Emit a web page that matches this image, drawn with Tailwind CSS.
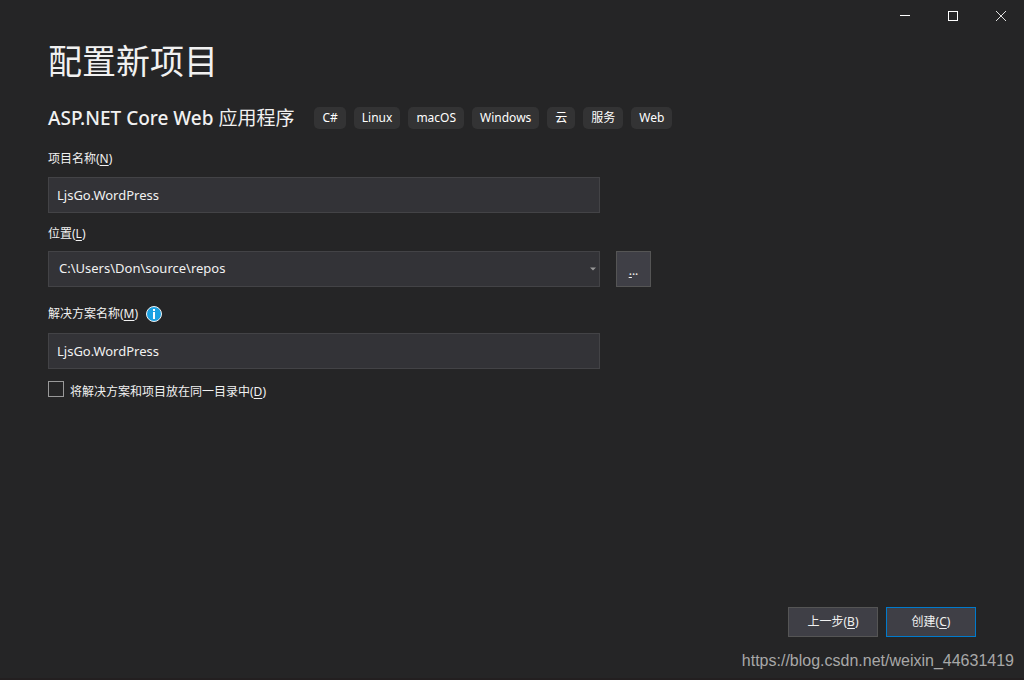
<!DOCTYPE html>
<html lang="zh-CN">
<head>
<meta charset="utf-8">
<meta name="viewport" content="width=device-width, initial-scale=1">
<title>配置新项目</title>
<script src="https://cdn.jsdelivr.net/npm/@tailwindcss/browser@4"></script>
</head>
<body class="flex min-h-screen flex-col border-b-2 border-[#231f20] bg-[#252526] font-['Noto_Sans','Noto_Sans_CJK_SC',sans-serif] text-xs text-[#f1f1f1]">
  <header class="flex h-8 justify-end">
    <button type="button" aria-label="最小化" class="flex h-8 w-12 items-center justify-center">
      <svg class="size-4" viewBox="0 0 16 16" fill="none" stroke="#fff" shape-rendering="crispEdges"><path d="M4 7.5h10"/></svg>
    </button>
    <button type="button" aria-label="最大化" class="flex h-8 w-12 items-center justify-center">
      <svg class="size-4" viewBox="0 0 16 16" fill="none" stroke="#fff" shape-rendering="crispEdges"><path d="M4.5 3.5h9v9h-9z"/></svg>
    </button>
    <button type="button" aria-label="关闭" class="flex h-8 w-12 items-center justify-center">
      <svg class="size-4" viewBox="0 0 16 16" fill="none" stroke="#e0e0e0"><path d="M4 3l10 10M14 3L4 13"/></svg>
    </button>
  </header>

  <main class="flex flex-1 flex-col px-12 pt-[7px]">
    <h1 class="text-[34px] leading-[44px]">配置新项目</h1>

    <div class="mt-[21px] flex items-center gap-5">
      <h2 class="text-[19px] leading-7"><span class="font-medium">ASP.NET Core Web</span> 应用程序</h2>
      <ul class="flex gap-2 leading-[22px] text-white">
        <li class="rounded-[5px] bg-[#333334] px-2">C#</li>
        <li class="rounded-[5px] bg-[#333334] px-2">Linux</li>
        <li class="rounded-[5px] bg-[#333334] px-2">macOS</li>
        <li class="rounded-[5px] bg-[#333334] px-2">Windows</li>
        <li class="rounded-[5px] bg-[#333334] px-2">云</li>
        <li class="rounded-[5px] bg-[#333334] px-2">服务</li>
        <li class="rounded-[5px] bg-[#333334] px-2">Web</li>
      </ul>
    </div>

    <form id="project" class="flex flex-col">
      <label for="name" class="mt-[17px] leading-5">项目名称(<u class="underline-offset-2">N</u>)</label>
      <input id="name" type="text" value="LjsGo.WordPress" class="mt-2 h-9 w-full max-w-[552px] border border-[#434346] bg-[#333337] px-2 text-[13px] outline-none">

      <label for="location" class="mt-[11px] leading-5">位置(<u class="underline-offset-2">L</u>)</label>
      <div class="mt-[7px] flex gap-4">
        <div class="relative w-full max-w-[552px]">
          <select id="location" class="h-9 w-full appearance-none border border-[#434346] bg-[#333337] px-2.5 text-[13px] outline-none">
            <option>C:\Users\Don\source\repos</option>
          </select>
          <svg class="pointer-events-none absolute top-4 right-1 h-1 w-1.5" viewBox="0 0 6 4" fill="#999"><path d="M0 0.5h6L3 3.5z"/></svg>
        </div>
        <button type="button" aria-label="浏览" class="h-9 w-[35px] shrink-0 border border-[#555555] bg-[#3f3f46] pt-1"><u class="underline-offset-2">.</u>..</button>
      </div>

      <div class="mt-4 flex items-center gap-2">
        <label for="solution" class="leading-[22px]">解决方案名称(<u class="underline-offset-2">M</u>)</label>
        <svg class="size-4" viewBox="0 0 16 16" role="img" aria-label="信息"><circle cx="8" cy="8" r="7.5" fill="#1ba1e2" stroke="#f1f1f1"/><path d="M7 3h2v2H7zM7 6h2v7H7z" fill="#fff"/></svg>
      </div>
      <input id="solution" type="text" value="LjsGo.WordPress" class="mt-2 h-9 w-full max-w-[552px] border border-[#434346] bg-[#333337] px-2 text-[13px] outline-none">

      <div class="mt-3 flex items-start gap-1.5">
        <input id="same" type="checkbox" class="size-4 appearance-none border border-[#999999] checked:bg-[#007acc]">
        <label for="same" class="leading-[22px]">将解决方案和项目放在同一目录中(<u class="underline-offset-2">D</u>)</label>
      </div>
    </form>
  </main>

  <footer class="flex flex-col items-end">
    <div class="flex gap-2 px-12">
      <button type="button" class="h-[30px] w-[90px] border border-[#555555] bg-[#3f3f46]">上一步(<u class="underline-offset-2">B</u>)</button>
      <button type="submit" form="project" class="h-[30px] w-[90px] border border-[#007acc] bg-[#3f3f46]">创建(<u class="underline-offset-2">C</u>)</button>
    </div>
    <p class="mt-3 mb-[5px] px-2.5 font-['Liberation_Sans',sans-serif] text-base leading-6 text-[#a8a8a8]">https://blog.csdn.net/weixin_44631419</p>
  </footer>
</body>
</html>
